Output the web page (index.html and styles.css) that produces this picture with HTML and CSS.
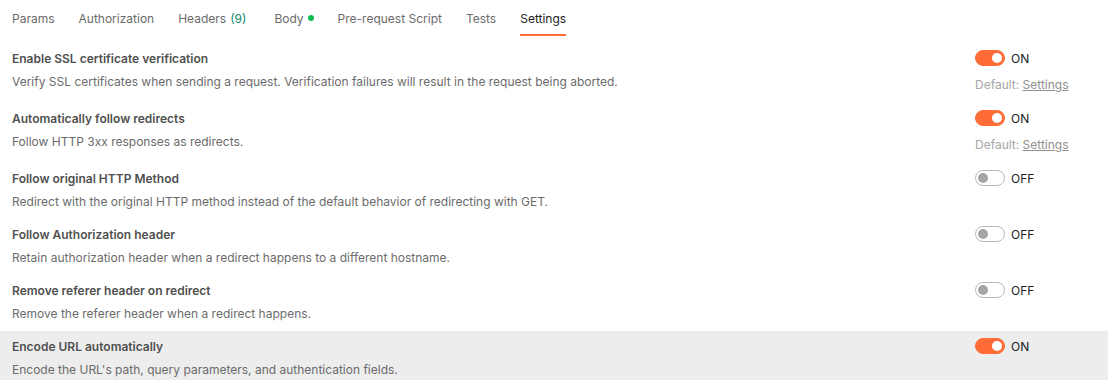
FILE: index.html
```html
<!DOCTYPE html>
<html lang="en">
<head>
    <meta charset="UTF-8">
    <title>Request Settings</title>
    <link rel="stylesheet" href="styles.css">
</head>
<body>

<div class="tabs">
    <span class="tab">Params</span>
    <span class="tab">Authorization</span>
    <span class="tab">Headers <span class="count">(9)</span></span>
    <span class="tab">Body <span class="dot"></span></span>
    <span class="tab">Pre-request Script</span>
    <span class="tab">Tests</span>
    <span class="tab active">Settings</span>
</div>

<div class="settings">
    <div class="row">
        <div class="info">
            <div class="title">Enable SSL certificate verification</div>
            <div class="desc">Verify SSL certificates when sending a request. Verification failures will result in the request being aborted.</div>
        </div>
        <div class="control">
            <div class="switch-line"><span class="switch on"></span><span class="state">ON</span></div>
            <div class="default">Default: <a>Settings</a></div>
        </div>
    </div>
    <div class="row">
        <div class="info">
            <div class="title">Automatically follow redirects</div>
            <div class="desc">Follow HTTP 3xx responses as redirects.</div>
        </div>
        <div class="control">
            <div class="switch-line"><span class="switch on"></span><span class="state">ON</span></div>
            <div class="default">Default: <a>Settings</a></div>
        </div>
    </div>
    <div class="row">
        <div class="info">
            <div class="title">Follow original HTTP Method</div>
            <div class="desc">Redirect with the original HTTP method instead of the default behavior of redirecting with GET.</div>
        </div>
        <div class="control">
            <div class="switch-line"><span class="switch"></span><span class="state">OFF</span></div>
        </div>
    </div>
    <div class="row">
        <div class="info">
            <div class="title">Follow Authorization header</div>
            <div class="desc">Retain authorization header when a redirect happens to a different hostname.</div>
        </div>
        <div class="control">
            <div class="switch-line"><span class="switch"></span><span class="state">OFF</span></div>
        </div>
    </div>
    <div class="row">
        <div class="info">
            <div class="title">Remove referer header on redirect</div>
            <div class="desc">Remove the referer header when a redirect happens.</div>
        </div>
        <div class="control">
            <div class="switch-line"><span class="switch"></span><span class="state">OFF</span></div>
        </div>
    </div>
    <div class="row highlight">
        <div class="info">
            <div class="title">Encode URL automatically</div>
            <div class="desc">Encode the URL's path, query parameters, and authentication fields.</div>
        </div>
        <div class="control">
            <div class="switch-line"><span class="switch on"></span><span class="state">ON</span></div>
        </div>
    </div>
</div>

</body>
</html>
```

FILE: styles.css
```css
body {
    margin: 0;
    font-family: Inter, "Noto Sans", sans-serif;
    background: #fff;
    color: #212121;
}
.tabs {
    display: flex;
    gap: 24px;
    padding: 0 12px;
    height: 43px;
}
.tab {
    display: flex;
    align-items: center;
    gap: 4px;
    height: 36px;
    font-size: 12px;
    color: #6b6b6b;
    border-bottom: 2px solid transparent;
    box-sizing: border-box;
    padding-top: 2px;
}
.tab.active {
    color: #212121;
    border-bottom-color: #ff6c37;
}
.count {
    color: #0f8a6e;
    margin-right: 4px;
}
.dot {
    width: 6px;
    height: 6px;
    border-radius: 50%;
    background: #0cbb52;
}
.row {
    display: flex;
    justify-content: space-between;
    padding: 8px 12px 0;
    height: 56px;
    box-sizing: border-box;
}
.row:nth-child(1),
.row:nth-child(2) {
    height: 60px;
}
.row.highlight {
    background: #ededed;
    height: 49px;
}
.title {
    font-size: 12px;
    font-weight: 600;
    color: #505050;
    line-height: 16px;
}
.desc {
    font-size: 12px;
    color: #6b6b6b;
    line-height: 16px;
    margin-top: 7px;
}
.control {
    width: 121px;
    flex-shrink: 0;
    margin-top: -1px;
}
.switch-line {
    display: flex;
    align-items: center;
    gap: 6px;
    height: 16px;
}
.switch {
    position: relative;
    width: 30px;
    height: 16px;
    border-radius: 8px;
    border: 1px solid #b8b8b8;
    box-sizing: border-box;
    background: #fff;
}
.switch::after {
    content: "";
    position: absolute;
    top: 2px;
    left: 2px;
    width: 10px;
    height: 10px;
    border-radius: 50%;
    background: #a6a6a6;
}
.switch.on {
    background: #ff6c37;
    border-color: #ff6c37;
}
.switch.on::after {
    left: auto;
    right: 2px;
    background: #fff;
}
.state {
    font-size: 12px;
    color: #212121;
}
.default {
    font-size: 12px;
    color: #a6a6a6;
    line-height: 16px;
    margin-top: 11px;
}
.default a {
    color: #8f8f8f;
    text-decoration: underline;
}
```
